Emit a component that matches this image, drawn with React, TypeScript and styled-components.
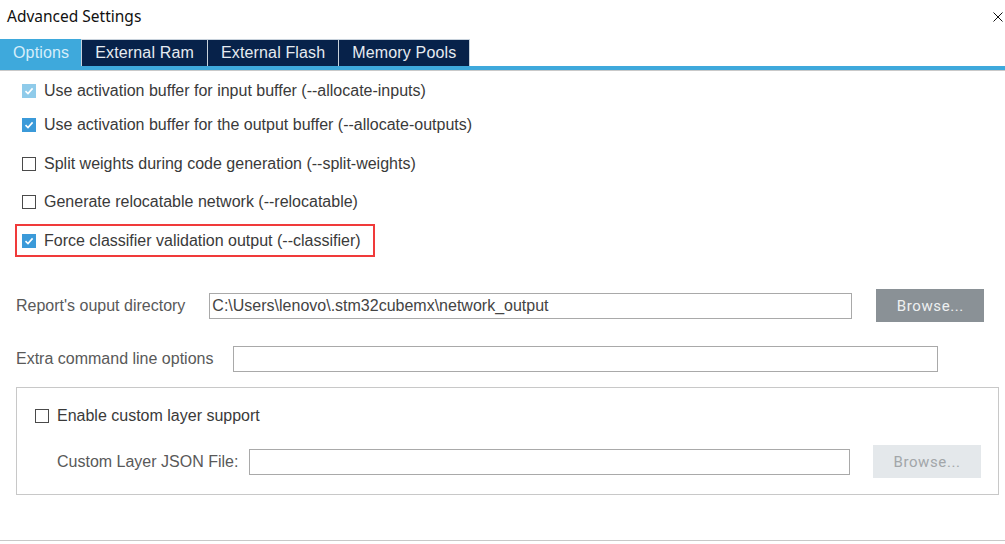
import React from 'react'
import styled, { createGlobalStyle } from 'styled-components'

const GlobalStyle = createGlobalStyle`
  html, body {
    margin: 0;
    padding: 0;
    background: #ffffff;
  }
  body {
    font-family: 'Liberation Sans', Arial, sans-serif;
  }
`

type Option = {
  label: string
  checked: boolean
  disabled?: boolean
  highlight?: boolean
  top: number
}

const options: Option[] = [
  { label: 'Use activation buffer for input buffer (--allocate-inputs)', checked: true, disabled: true, top: 4 },
  { label: 'Use activation buffer for the output buffer (--allocate-outputs)', checked: true, top: 1 },
  { label: 'Split weights during code generation (--split-weights)', checked: false, top: 6 },
  { label: 'Generate relocatable network (--relocatable)', checked: false, top: 5 },
  { label: 'Force classifier validation output (--classifier)', checked: true, highlight: true, top: 6 },
]

const tabs = ['Options', 'External Ram', 'External Flash', 'Memory Pools']

const CheckBox: React.FC<{ checked: boolean; disabled?: boolean }> = ({ checked, disabled }) => (
  <Box $checked={checked} $disabled={disabled}>
    {checked && (
      <svg width="10" height="10" viewBox="0 0 10 10">
        <path d="M1.5 5.2 L4 7.6 L8.6 2.4" stroke="#ffffff" strokeWidth="1.6" fill="none" />
      </svg>
    )}
  </Box>
)

const App: React.FC = () => {
  return (
    <Window>
      <GlobalStyle />
      <TitleBar>
        <Title>Advanced Settings</Title>
        <Close>
          <svg width="10" height="10" viewBox="0 0 10 10">
            <path d="M0.5 0.5 L9.5 9.5 M9.5 0.5 L0.5 9.5" stroke="#111" strokeWidth="1" />
          </svg>
        </Close>
      </TitleBar>
      <TabStrip>
        {tabs.map((t, i) => (
          <Tab key={t} $active={i === 0}>
            {t}
          </Tab>
        ))}
      </TabStrip>
      <Body>
        {options.map((o) => (
          <OptionRow key={o.label} $top={o.top} $highlight={o.highlight}>
            <CheckBox checked={o.checked} disabled={o.disabled} />
            <OptionText>{o.label}</OptionText>
          </OptionRow>
        ))}
        <FieldRow $top={32} $height={33}>
          <FieldLabel>Report's ouput directory</FieldLabel>
          <TextInput $width={643} $left={24}>C:\Users\lenovo\.stm32cubemx\network_output</TextInput>
          <BrowseButton $left={24}>Browse...</BrowseButton>
        </FieldRow>
        <FieldRow $top={24} $height={25}>
          <FieldLabel>Extra command line options</FieldLabel>
          <TextInput $width={705} $left={20} />
        </FieldRow>
        <Group>
          <GroupCheck>
            <CheckBox checked={false} />
            <OptionText>Enable custom layer support</OptionText>
          </GroupCheck>
          <GroupField>
            <FieldLabel>Custom Layer JSON File:</FieldLabel>
            <TextInput $width={601} $left={11} />
            <BrowseButton $left={23} $disabled>
              Browse...
            </BrowseButton>
          </GroupField>
        </Group>
      </Body>
      <Footer />
    </Window>
  )
}

const Window = styled.div({
  width: '1005px',
  height: '544px',
  display: 'flex',
  flexDirection: 'column',
  overflow: 'hidden',
  background: '#ffffff',
})

const TitleBar = styled.div({
  height: '39px',
  display: 'flex',
  alignItems: 'flex-start',
  justifyContent: 'space-between',
  padding: '0 2px 0 7px',
  boxSizing: 'border-box',
})

const Title = styled.div({
  fontFamily: "'Noto Sans', 'Open Sans', sans-serif",
  fontSize: '15.5px',
  color: '#111111',
  marginTop: '5px',
})

const Close = styled.div({
  marginTop: '12px',
  width: '10px',
  height: '10px',
  display: 'flex',
})

const TabStrip = styled.div({
  display: 'flex',
  height: '27px',
  borderBottom: '4px solid #3ea9dc',
  boxShadow: '0 1px 0 #c9c9c9',
})

const Tab = styled.div<{ $active?: boolean }>(({ $active }) => ({
  height: '27px',
  boxSizing: 'border-box',
  padding: $active ? '0 12px 0 13px' : '0 13px',
  display: 'flex',
  alignItems: 'center',
  fontFamily: "'Liberation Sans', Arial, sans-serif",
  fontSize: '16px',
  letterSpacing: '0.15px',
  color: $active ? '#d6eefa' : '#e6ebf1',
  background: $active ? '#3ea9dc' : '#07224a',
  borderRight: '1px solid #c8d2dc',
  borderTop: $active ? 'none' : '1px solid #c8d2dc',
}))

const Body = styled.div({
  flex: 1,
  display: 'flex',
  flexDirection: 'column',
  padding: '0 6px 0 16px',
})

const OptionRow = styled.div<{ $top: number; $highlight?: boolean }>(({ $top, $highlight }) => ({
  marginTop: `${$top}px`,
  height: '33px',
  boxSizing: 'border-box',
  display: 'flex',
  alignItems: 'center',
  alignSelf: 'flex-start',
  marginLeft: $highlight ? '-1px' : '0',
  padding: $highlight ? '0 12px 0 5px' : '0 0 0 6px',
  border: $highlight ? '2px solid #f03a3a' : 'none',
}))

const Box = styled.span<{ $checked: boolean; $disabled?: boolean }>(({ $checked, $disabled }) => ({
  width: '14px',
  height: '14px',
  boxSizing: 'border-box',
  display: 'inline-flex',
  alignItems: 'center',
  justifyContent: 'center',
  flexShrink: 0,
  background: $checked ? ($disabled ? '#8fcbea' : '#3b9ad9') : '#ffffff',
  border: $checked ? 'none' : '1px solid #4a4a4a',
  marginRight: '8px',
}))

const OptionText = styled.span({
  fontSize: '16px',
  color: '#3a3a3a',
  whiteSpace: 'nowrap',
})

const FieldRow = styled.div<{ $top: number; $height: number }>(({ $top, $height }) => ({
  marginTop: `${$top}px`,
  height: `${$height}px`,
  display: 'flex',
  alignItems: 'center',
}))

const FieldLabel = styled.span({
  fontSize: '16px',
  color: '#595959',
  whiteSpace: 'nowrap',
})

const TextInput = styled.div<{ $width: number; $left: number }>(({ $width, $left }) => ({
  width: `${$width}px`,
  height: '26px',
  boxSizing: 'border-box',
  marginLeft: `${$left}px`,
  border: '1px solid #a9a9a9',
  background: '#ffffff',
  fontSize: '16px',
  color: '#444444',
  display: 'flex',
  alignItems: 'center',
  padding: '0 2px',
  whiteSpace: 'nowrap',
}))

const BrowseButton = styled.div<{ $left: number; $disabled?: boolean }>(({ $left, $disabled }) => ({
  width: '108px',
  height: '33px',
  marginLeft: `${$left}px`,
  display: 'flex',
  alignItems: 'center',
  justifyContent: 'center',
  background: $disabled ? '#e4e8eb' : '#8a9196',
  color: $disabled ? '#a2a6a9' : '#eef0f1',
  fontSize: '15px',
  letterSpacing: '0.6px',
  fontFamily: "Roboto, 'Liberation Sans', sans-serif",
}))

const Group = styled.div({
  marginTop: '16px',
  height: '108px',
  boxSizing: 'border-box',
  border: '1px solid #c8c8c8',
  display: 'flex',
  flexDirection: 'column',
  padding: '0 17px 0 18px',
})

const GroupCheck = styled.div({
  marginTop: '14px',
  height: '28px',
  display: 'flex',
  alignItems: 'center',
})

const GroupField = styled.div({
  marginTop: '15px',
  height: '33px',
  display: 'flex',
  alignItems: 'center',
  paddingLeft: '22px',
})

const Footer = styled.div({
  height: '3px',
  borderTop: '1px solid #c8c8c8',
})

export default App
